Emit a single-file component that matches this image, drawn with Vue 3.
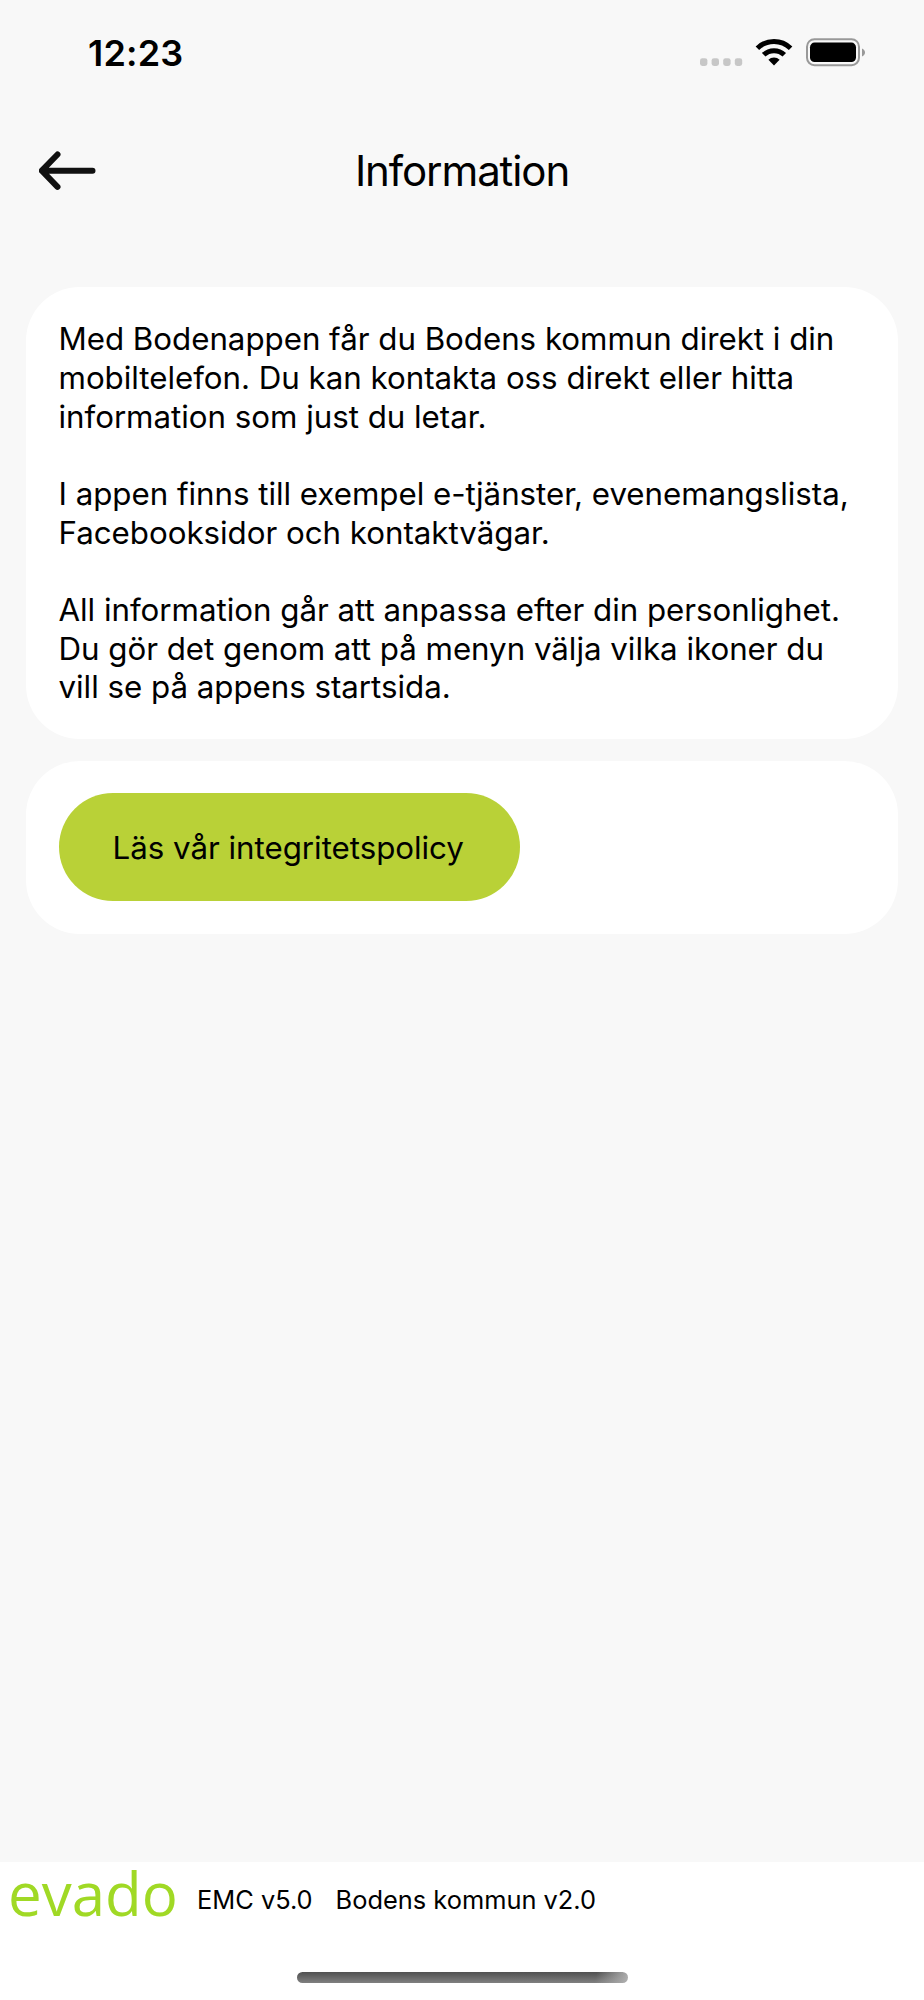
<template>
  <div class="screen">
    <div class="status">
      <span class="time">{{ time }}</span>
      <svg class="status-icons" width="170" height="32" viewBox="0 0 170 32">
        <g fill="#c7c7c7">
          <rect v-for="n in 4" :key="n" :x="(n - 1) * 11.6" y="20.2" width="7.4" height="7.8" rx="2.4" />
        </g>
        <g fill="none" stroke="#000" stroke-width="5">
          <path d="M57.4 10.2a23.8 23.8 0 0 1 33.2 0" />
          <path d="M63.7 16.8a14.8 14.8 0 0 1 20.6 0" />
        </g>
        <path d="M68.4 21.7a8 8 0 0 1 11.2 0L74 27.6z" />
        <rect x="107" y="1.2" width="52" height="26" rx="7.5" fill="none" stroke="#999" stroke-width="2" />
        <rect x="110" y="4.6" width="46" height="19.4" rx="4.6" />
        <path d="M162 10.4c4 1.4 4 6.6 0 8z" fill="#999" />
      </svg>
    </div>

    <header class="header">
      <a class="back">
        <svg width="60" height="42" viewBox="0 0 60 42">
          <path d="M18.5 4.5 2.8 20.7l15.7 16.2M3.5 20.7h50" />
        </svg>
      </a>
      <h1>Information</h1>
    </header>

    <main class="content">
      <section class="card">
        <p v-for="(lines, i) in info" :key="i">
          <span v-for="line in lines" :key="line">{{ line }}</span>
        </p>
      </section>
      <section class="card">
        <a class="button">Läs vår integritetspolicy</a>
      </section>
    </main>

    <footer class="footer">
      <div class="versions">
        <b class="logo">evado</b>
        <span>EMC v5.0</span>
        <span>Bodens kommun v2.0</span>
      </div>
      <div class="home"></div>
    </footer>
  </div>
</template>

<script setup>
import { ref } from 'vue'
const time = ref('12:23')
const info = ref([
  [
    'Med Bodenappen får du Bodens kommun direkt i din',
    'mobiltelefon. Du kan kontakta oss direkt eller hitta',
    'information som just du letar.'
  ],
  [
    'I appen finns till exempel e-tjänster, evenemangslista,',
    'Facebooksidor och kontaktvägar.'
  ],
  [
    'All information går att anpassa efter din personlighet.',
    'Du gör det genom att på menyn välja vilka ikoner du',
    'vill se på appens startsida.'
  ]
])
</script>

<style>
body {
  margin: 0;
  background: #f8f8f8;
}
</style>

<style scoped>
.screen {
  display: flex;
  flex-direction: column;
  width: 924px;
  height: 2000px;
  background: #f8f8f8;
  color: #000;
  font-family: Inter, 'Liberation Sans', sans-serif;
  overflow: hidden;
}
.status {
  display: flex;
  justify-content: space-between;
  align-items: center;
  box-sizing: border-box;
  height: 106px;
  padding: 0 54px 0 88px;
}
.time {
  font-size: 36px;
  font-weight: 600;
  letter-spacing: 0.2px;
}
.status-icons {
  display: block;
  padding-top: 1px;
}
.header {
  display: grid;
  grid-template-columns: 100px 1fr 100px;
  align-items: center;
  height: 130px;
}
.back {
  padding-left: 39px;
}
.back svg {
  display: block;
}
.back path {
  fill: none;
  stroke: #111;
  stroke-width: 6;
  stroke-linecap: round;
  stroke-linejoin: round;
}
h1 {
  margin: 0;
  padding-bottom: 1px;
  font-size: 42px;
  font-weight: 400;
  letter-spacing: -1.1px;
  text-align: center;
}
.content {
  display: flex;
  flex: 1;
  flex-direction: column;
  gap: 21.3px;
  padding: 51px 26px 0;
}
.card {
  padding: 32.5px;
  border-radius: 54px;
  background: #fff;
}
.card:first-child {
  padding: 33.4px 32.5px 32.3px;
}
p {
  margin: 0 0 38.67px;
  font-size: 31.3px;
  line-height: 38.67px;
  letter-spacing: -0.03px;
}
p:last-child {
  margin-bottom: 0;
}
p span {
  display: block;
  white-space: nowrap;
}
.button {
  display: flex;
  align-items: center;
  justify-content: center;
  box-sizing: border-box;
  width: 461.5px;
  height: 108px;
  padding: 1px 2px 0 0;
  border-radius: 54px;
  background: #b9d137;
  font-size: 31.3px;
  letter-spacing: -0.03px;
}
.footer {
  box-sizing: border-box;
  height: 138px;
  background: #fff;
}
.versions {
  display: flex;
  align-items: center;
  gap: 23px;
  height: 76px;
  padding-left: 8px;
  font-size: 25.4px;
}
.versions span {
  padding-bottom: 1px;
}
.logo {
  flex: none;
  width: 166px;
  padding-bottom: 14px;
  color: #a0d925;
  font-family: 'Open Sans', sans-serif;
  font-size: 60px;
  font-weight: 400;
  line-height: 82px;
  white-space: nowrap;
}
.home {
  width: 331px;
  height: 11px;
  margin: 34px auto 0;
  border-radius: 6px;
  background: linear-gradient(100deg, transparent 90%, #b0b0b0), linear-gradient(#505050, #808080);
}
</style>
